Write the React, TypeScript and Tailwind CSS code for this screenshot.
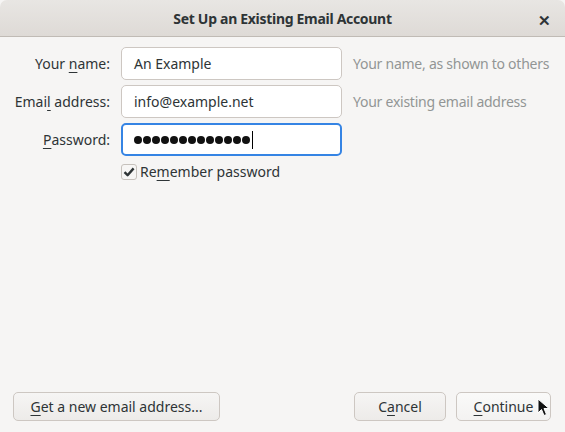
import { useState } from "react";

function Mnemonic({ text, index }: { text: string; index: number }) {
  return (
    <>
      {text.slice(0, index)}
      <span className="underline underline-offset-[3px] decoration-1">{text[index]}</span>
      {text.slice(index + 1)}
    </>
  );
}

function Field({
  label,
  hint,
  value,
  focused
}: {
  label: React.ReactNode;
  hint?: string;
  value: React.ReactNode;
  focused?: boolean;
}) {
  return (
    <div className="flex items-center">
      <label className="w-[110px] shrink-0 text-right text-[#2e3436]">{label}</label>
      <div
        className={
          focused
            ? "ml-[11px] flex h-[33px] w-[221px] shrink-0 items-center rounded-[5px] border-2 border-[#3584e4] bg-white pl-[11px]"
            : "ml-[11px] flex h-[33px] w-[221px] shrink-0 items-center rounded-[5px] border border-[#cdc7c2] bg-white pl-[12px]"
        }
      >
        {value}
      </div>
      {hint ? <span className="ml-[11px] whitespace-nowrap tracking-[-0.25px] text-[#929595]">{hint}</span> : null}
    </div>
  );
}

const dots = Array.from({ length: 13 }, (_, i) => i);

export default function App() {
  const [remember, setRemember] = useState(true);

  return (
    <div className="flex h-[432px] w-[565px] flex-col overflow-hidden bg-[#f6f5f4] font-['Noto_Sans',sans-serif] text-[14px] text-[#2e3436]">
      <div className="relative flex h-[37px] shrink-0 items-center justify-center rounded-t-[7px] border-b border-[#c0bbb5] bg-gradient-to-b from-[#e8e6e3] to-[#dedad6]">
        <span className="text-[14px] font-bold tracking-[-0.3px] text-[#2e3436]">Set Up an Existing Email Account</span>
        <span className="absolute right-[14px] top-[9px] text-[15px] font-bold text-[#2e3436]">✕</span>
      </div>

      <div className="flex flex-col gap-[5px] pt-[10px]">
        <Field label={<Mnemonic text="Your name:" index={5} />} hint="Your name, as shown to others" value="An Example" />
        <Field label={<Mnemonic text="Email address:" index={4} />} hint="Your existing email address" value="info@example.net" />
        <Field
          label={<Mnemonic text="Password:" index={0} />}
          focused
          value={
            <span className="flex items-center">
              <span className="flex gap-[1px]">
                {dots.map((d) => (
                  <span key={d} className="h-[8px] w-[8px] rounded-full bg-[#111]" />
                ))}
              </span>
              <span className="ml-[2px] h-[18px] w-px bg-black" />
            </span>
          }
        />
        <div className="ml-[121px] flex items-center">
          <button
            type="button"
            onClick={() => setRemember((v) => !v)}
            className="flex h-[16px] w-[16px] items-center justify-center rounded-[3px] border border-[#c6c1bc] bg-[#f7f6f5]"
          >
            {remember ? (
              <svg width="12" height="12" viewBox="0 0 12 12">
                <path d="M1.5 6.2 L4.6 9.2 L10.6 2.4" fill="none" stroke="#2e3436" strokeWidth="2.4" strokeLinejoin="round" />
              </svg>
            ) : null}
          </button>
          <span className="ml-[3px]">
            <Mnemonic text="Remember password" index={2} />
          </span>
        </div>
      </div>

      <div className="mt-auto flex items-center px-[13px] pb-[11px]">
        <button
          type="button"
          className="h-[29px] w-[207px] rounded-[5px] border border-[#cdc7c2] bg-gradient-to-b from-[#f6f5f4] to-[#edebe9] text-[#2e3436]"
        >
          <Mnemonic text="Get a new email address..." index={0} />
        </button>
        <div className="ml-auto flex gap-[10px] pr-px">
          <button
            type="button"
            className="h-[29px] w-[92px] rounded-[5px] border border-[#cdc7c2] bg-gradient-to-b from-[#f6f5f4] to-[#edebe9]"
          >
            <Mnemonic text="Cancel" index={1} />
          </button>
          <button
            type="button"
            className="relative h-[29px] w-[95px] rounded-[5px] border border-[#cdc7c2] bg-gradient-to-b from-[#fafaf9] to-[#f3f2f1]"
          >
            <Mnemonic text="Continue" index={0} />
            <svg className="absolute left-[80px] top-[5px]" width="14" height="20" viewBox="0 0 14 20">
              <path d="M1 1 L1 15 L4.5 11.5 L7 17.5 L9.5 16.5 L7 10.5 L12 10.5 Z" fill="#111" stroke="#fff" strokeWidth="1" strokeLinejoin="round" />
            </svg>
          </button>
        </div>
      </div>
    </div>
  );
}
